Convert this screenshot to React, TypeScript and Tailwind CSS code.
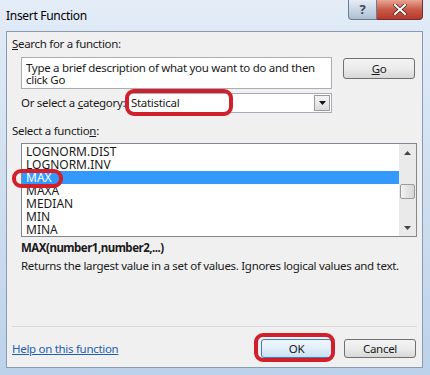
import React from "react";

const font = { fontFamily: '"Noto Sans", "Segoe UI", sans-serif' };

function Oval({ cls }: { cls: string }) {
  return <div className={`absolute border-[4px] border-[#d21f2c] rounded-[9px] ${cls}`} />;
}

export default function App() {
  const items = ["LOGNORM.DIST", "LOGNORM.INV", "MAX", "MAXA", "MEDIAN", "MIN", "MINA"];
  return (
    <div
      className="relative w-[430px] h-[375px] overflow-hidden bg-gradient-to-b from-[#e3ecf7] via-[#cfdff0] to-[#bcd2ea] text-[11.5px] tracking-[-0.3px] text-[#1a1a1a] whitespace-nowrap"
      style={font}
    >
      {/* title bar */}
      <div className="flex h-[31px] items-start">
        <div className="pl-[6px] pt-[8px] text-[12px] leading-[16px] text-black tracking-[-0.3px]">Insert Function</div>
        <div className="ml-auto mr-[7px] flex">
          <div className="w-[29px] h-[20px] rounded-bl-[4px] border border-t-0 border-[#6d7d90] bg-gradient-to-b from-[#e6edf5] via-[#c9d6e4] to-[#aebfd3] flex items-center justify-center text-[13px] font-bold text-[#394a5e] leading-none">
            ?
          </div>
          <div className="w-[46px] h-[20px] rounded-br-[4px] border border-t-0 border-l-0 border-[#6b3030] bg-gradient-to-b from-[#e8a593] via-[#c75a4a] to-[#b8372a] flex items-center justify-center">
            <svg width="14" height="11" viewBox="0 0 14 11">
              <path d="M2 1 L12 10 M12 1 L2 10" stroke="#3b1010" strokeWidth="3.4" strokeLinecap="round" />
              <path d="M2 1 L12 10 M12 1 L2 10" stroke="#ffffff" strokeWidth="2.2" strokeLinecap="round" />
            </svg>
          </div>
        </div>
      </div>

      {/* client area */}
      <div className="ml-[6px] w-[417px] h-[337px] border border-[#8a9bb0] bg-[#f0f0f0] flex flex-col">
        <div className="mt-[4px] ml-[5px] h-[15px] leading-[15px]">
          <span className="underline">S</span>earch for a function:
        </div>
        <div className="mt-[6px] ml-[14px] flex items-start">
          <div className="w-[311px] h-[32px] bg-white border border-[#abadb3] pl-[4px] pt-[4px] leading-[12px] whitespace-normal">
            Type a brief description of what you want to do and then click Go
          </div>
          <div className="ml-[11px] mt-[1px] w-[72px] h-[21px] rounded-[3px] border border-[#707070] bg-gradient-to-b from-[#f3f3f3] via-[#ebebeb] to-[#d8d8d8] flex items-center justify-center leading-none">
            <span className="underline">G</span>o
          </div>
        </div>
        <div className="mt-[4px] ml-[14px] flex h-[20px]">
          <div className="w-[107px] leading-[20px]">
            Or select a <span className="underline">c</span>ategory:
          </div>
          <div className="w-[204px] h-[20px] bg-white border border-[#a5acb5] flex items-center">
            <div className="flex-1 pl-[2px] leading-[18px]">Statistical</div>
            <div className="w-[16px] h-[16px] mr-[1px] border border-[#9a9a9a] bg-gradient-to-b from-[#f4f4f4] to-[#dcdcdc] flex items-center justify-center">
              <svg width="7" height="4" viewBox="0 0 7 4">
                <path d="M0 0 H7 L3.5 4 Z" fill="#111" />
              </svg>
            </div>
          </div>
        </div>
        <div className="mt-[10px] ml-[5px] h-[15px] leading-[15px]">
          Select a functio<span className="underline">n</span>:
        </div>
        <div className="mt-[5px] ml-[14px] w-[396px] h-[94px] border border-[#828790] bg-white flex">
          <div className="flex-1 pt-[1px] text-[12px] tracking-[0px]">
            {items.map((it) => (
              <div
                key={it}
                className={`h-[13px] leading-[13px] pl-[4px] ${it === "MAX" ? "bg-[#3399ff] text-white" : ""}`}
              >
                {it}
              </div>
            ))}
          </div>
          <div className="w-[17px] bg-[#eaeaea] flex flex-col items-center">
            <div className="h-[17px] flex items-center justify-center">
              <svg width="7" height="4" viewBox="0 0 7 4">
                <path d="M0 4 H7 L3.5 0 Z" fill="#444" />
              </svg>
            </div>
            <div className="mt-[23px] w-[15px] h-[15px] rounded-[2px] border border-[#9a9a9a] bg-gradient-to-r from-[#f2f2f2] to-[#d6d6d6]" />
            <div className="mt-auto h-[17px] flex items-center justify-center">
              <svg width="7" height="4" viewBox="0 0 7 4">
                <path d="M0 0 H7 L3.5 4 Z" fill="#444" />
              </svg>
            </div>
          </div>
        </div>
        <div className="mt-[3px] ml-[14px] h-[15px] leading-[15px] font-bold tracking-[-0.5px]">MAX(number1,number2,...)</div>
        <div className="mt-[3px] ml-[14px] h-[15px] leading-[15px]">
          Returns the largest value in a set of values. Ignores logical values and text.
        </div>
        <div className="mt-[53px] ml-[5px] w-[405px] h-[1px] bg-[#dadada]" />
        <div className="mt-[12px] ml-[5px] flex items-start">
          <div className="mt-[1px] leading-[17px] text-[#1f5fae] underline">Help on this function</div>
          <div className="ml-auto flex mr-[6px]">
            <div className="w-[71px] h-[19px] rounded-[3px] border border-[#3c7fb1] bg-gradient-to-b from-[#eef6fc] via-[#e1eef9] to-[#c8e0f3] flex items-center justify-center leading-none">
              OK
            </div>
            <div className="ml-[12px] w-[72px] h-[19px] rounded-[3px] border border-[#707070] bg-gradient-to-b from-[#f3f3f3] via-[#ebebeb] to-[#d8d8d8] flex items-center justify-center leading-none">
              Cancel
            </div>
          </div>
        </div>
      </div>

      <Oval cls="left-[125px] top-[89px] w-[108px] h-[27px]" />
      <Oval cls="left-[12px] top-[169px] w-[51px] h-[19px]" />
      <Oval cls="left-[254px] top-[333px] w-[81px] h-[29px]" />
    </div>
  );
}
